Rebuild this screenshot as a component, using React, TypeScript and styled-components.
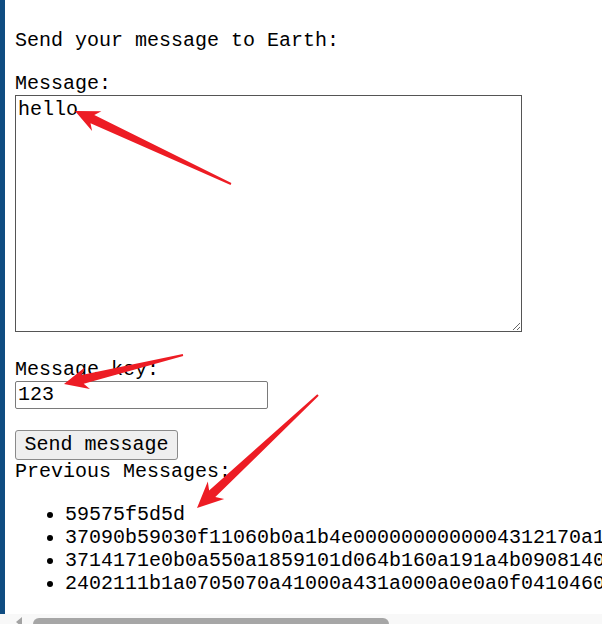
import React from 'react';
import styled, { createGlobalStyle } from 'styled-components';

const GlobalStyle = createGlobalStyle`
  html, body {
    margin: 0;
    padding: 0;
    background: #fff;
    overflow: hidden;
  }
  body {
    font-family: 'Liberation Mono', 'Courier New', monospace;
    font-size: 20px;
    color: #000;
  }
`;

const Page = styled.div`
  position: relative;
  display: flex;
  flex-direction: column;
  width: 602px;
  height: 624px;
  overflow: hidden;
`;

const Content = styled.main`
  flex: 1;
  min-height: 0;
  border-left: 5px solid #0f4c81;
  padding: 29px 0 0 10px;
  overflow: hidden;
`;

const Title = styled.div`
  margin-bottom: 20px;
`;

const Label = styled.div<{ $gap?: number }>`
  margin-top: ${(p) => p.$gap ?? 0}px;
`;

const MessageBox = styled.textarea`
  display: block;
  box-sizing: border-box;
  width: 507px;
  height: 237px;
  margin: 0;
  padding: 2px;
  border: 1px solid #555;
  font: inherit;
  color: #000;
`;

const KeyInput = styled.input`
  display: block;
  box-sizing: border-box;
  width: 253px;
  height: 28px;
  margin: 0;
  padding: 1px 2px;
  border: 1px solid #7a7a7a;
  border-radius: 2px;
  font: inherit;
  color: #000;
`;

const SendButton = styled.button`
  display: block;
  box-sizing: border-box;
  width: 163px;
  height: 30px;
  margin: 21px 0 0;
  padding: 0;
  background: #efefef;
  border: 1px solid #8a8a8a;
  border-radius: 3px;
  font: inherit;
  color: #000;
`;

const MessageList = styled.ul`
  margin: 20px 0;
  padding-left: 50px;
  list-style: disc;
`;

const MessageItem = styled.li`
  white-space: nowrap;
`;

const ScrollTrack = styled.div`
  flex: 0 0 10px;
  display: flex;
  align-items: flex-start;
  background: #f8f8f8;
  overflow: hidden;
`;

const ScrollArrow = styled.span`
  flex: none;
  width: 0;
  height: 0;
  margin: 3px 0 0 16px;
  border-top: 5.5px solid transparent;
  border-bottom: 5.5px solid transparent;
  border-right: 6px solid #a3a3a3;
`;

const ScrollThumb = styled.span`
  flex: none;
  width: 356px;
  height: 13px;
  margin: 4px 0 0 11px;
  border-radius: 6px;
  background: #a6a6a6;
`;

const Annotations = styled.svg`
  position: absolute;
  left: 0;
  top: 0;
  pointer-events: none;
`;

type Pt = [number, number];

const arrowPoints = (tip: Pt, tail: Pt, head: number, half: number, neck = 9, end = 2) => {
  const dx = tail[0] - tip[0];
  const dy = tail[1] - tip[1];
  const len = Math.hypot(dx, dy);
  const ux = dx / len;
  const uy = dy / len;
  const at = (a: number, b: number) =>
    `${(tip[0] + ux * a - uy * b).toFixed(1)},${(tip[1] + uy * a + ux * b).toFixed(1)}`;
  return [
    at(0, 0),
    at(head, half),
    at(head * 0.8, neck / 2),
    at(len, end / 2),
    at(len, -end / 2),
    at(head * 0.8, -neck / 2),
    at(head, -half),
  ].join(' ');
};

const arrows: { tip: Pt; tail: Pt; head: number; half: number }[] = [
  { tip: [75, 111], tail: [231, 184], head: 24, half: 11 },
  { tip: [64, 384], tail: [183, 355], head: 24, half: 11 },
  { tip: [197, 508], tail: [318, 395], head: 26, half: 12 },
];

const messages = [
  '59575f5d5d',
  '37090b59030f11060b0a1b4e0000000000004312170a1c0b1d4f0e',
  '3714171e0b0a550a1859101d064b160a191a4b09081401571c0a',
  '2402111b1a0705070a41000a431a000a0e0a0f0410460c1b0d55',
];

export default function App() {
  return (
    <Page>
      <GlobalStyle />
      <Content>
        <Title>Send your message to Earth:</Title>
        <Label>Message:</Label>
        <MessageBox defaultValue="hello" />
        <Label $gap={25.5}>Message key:</Label>
        <KeyInput defaultValue="123" />
        <SendButton>Send message</SendButton>
        <Label>Previous Messages:</Label>
        <MessageList>
          {messages.map((m) => (
            <MessageItem key={m}>{m}</MessageItem>
          ))}
        </MessageList>
      </Content>
      <ScrollTrack>
        <ScrollArrow />
        <ScrollThumb />
      </ScrollTrack>
      <Annotations width={602} height={624}>
        {arrows.map((a, i) => (
          <polygon key={i} points={arrowPoints(a.tip, a.tail, a.head, a.half)} fill="#ed1c24" />
        ))}
      </Annotations>
    </Page>
  );
}
